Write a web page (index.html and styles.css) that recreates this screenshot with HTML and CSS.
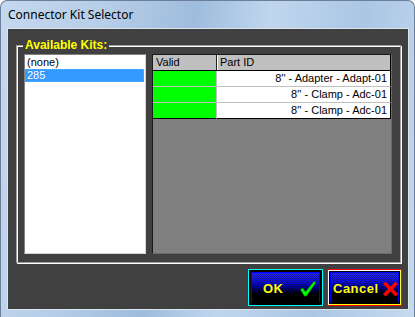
FILE: index.html
```html
<!DOCTYPE html>
<html lang="en">
<head>
    <meta charset="UTF-8">
    <title>Connector Kit Selector</title>
    <link rel="stylesheet" href="styles.css">
</head>
<body>
    <div class="window">
        <div class="titlebar">Connector Kit Selector</div>
        <div class="client">
            <fieldset class="group">
                <legend>Available Kits:</legend>
                <div class="group-body">
                    <ul class="kit-list">
                        <li>(none)</li>
                        <li class="selected">285</li>
                    </ul>
                    <div class="grid">
                        <table class="parts">
                            <thead>
                                <tr>
                                    <th class="col-valid">Valid</th>
                                    <th class="col-part">Part ID</th>
                                </tr>
                            </thead>
                            <tbody>
                                <tr>
                                    <td class="col-valid is-valid"></td>
                                    <td class="col-part">8'' - Adapter - Adapt-01</td>
                                </tr>
                                <tr>
                                    <td class="col-valid is-valid"></td>
                                    <td class="col-part">8'' - Clamp - Adc-01</td>
                                </tr>
                                <tr>
                                    <td class="col-valid is-valid"></td>
                                    <td class="col-part">8'' - Clamp - Adc-01</td>
                                </tr>
                            </tbody>
                        </table>
                    </div>
                </div>
            </fieldset>
            <div class="actions">
                <button class="btn btn-ok">
                    <span class="face">
                        <span class="label">OK</span>
                        <svg class="icon" width="16" height="16" viewBox="0 0 16 16">
                            <polygon points="0.5,8.5 2.8,7.2 5.5,11 14,0.5 15.8,1.8 6.3,15 4.4,15" fill="#00ff00" stroke="#00a000" stroke-width="0.7"/>
                        </svg>
                    </span>
                </button>
                <button class="btn btn-cancel">
                    <span class="face">
                        <span class="label">Cancel</span>
                        <svg class="icon" width="15" height="14" viewBox="0 0 15 14">
                            <path d="M2.5 2 L12.5 12 M12.5 2 L2.5 12" stroke="#ff0000" stroke-width="3.6" stroke-linecap="square"/>
                        </svg>
                    </span>
                </button>
            </div>
        </div>
    </div>
</body>
</html>
```

FILE: styles.css
```css
:root {
    --client-color: #404040;
    --grid-color: #808080;
    --header-color: #c0c0c0;
    --line-color: #c0c0c0;
    --valid-color: #00ff00;
    --select-color: #3399ff;
    --label-color: #ffff00;
}

* {
    box-sizing: border-box;
}

body {
    margin: 0;
    background-color: #ffffff;
    font-family: "Liberation Sans", Arial, sans-serif;
}

.window {
    width: 415px;
    height: 317px;
    display: flex;
    flex-direction: column;
    padding: 0 5px 7px 6px;
    border: 1px solid #6b7f99;
    border-bottom: none;
    border-radius: 7px 7px 0 0;
    background: linear-gradient(100deg, #c4d8ee 0%, #b7cee8 22%, #9ebcdd 42%, #c0d6ee 58%, #abc6e4 78%, #c6daef 100%);
}

.titlebar {
    height: 27px;
    padding: 6px 0 0 1px;
    font-family: "Noto Sans", "Open Sans", sans-serif;
    font-size: 12px;
    line-height: 16px;
    color: #000;
}

.client {
    flex: 1;
    display: flex;
    flex-direction: column;
    padding: 0 7px 0 8px;
    border: 1px solid #dbe5f0;
    background-color: var(--client-color);
}

.group {
    margin: 9px 0 0 0;
    padding: 2px 8px 8px 7px;
    min-inline-size: 0;
    border: 1px solid #a0a0a0;
    box-shadow: inset 1px 1px 0 #fff, 1px 1px 0 #fff;
}

.group legend {
    margin-left: -1px;
    padding: 0 2px;
    font-size: 12px;
    font-weight: bold;
    line-height: 14px;
    color: var(--label-color);
    background-color: var(--client-color);
}

.group-body {
    display: flex;
    gap: 6px;
    height: 200px;
}

.kit-list {
    width: 122px;
    margin: 0;
    padding: 1px 1px 0 0;
    list-style: none;
    background-color: #fff;
    border: 1px solid;
    border-color: #828282 #d4d4d4 #d4d4d4 #828282;
    font-size: 11px;
}

.kit-list li {
    height: 13px;
    padding-left: 2px;
    line-height: 13px;
}

.kit-list .selected {
    color: #fff;
    background-color: var(--select-color);
    outline: 1px dotted #e89040;
    outline-offset: -1px;
}

.grid {
    width: 240px;
    background-color: var(--grid-color);
    border: 1px solid;
    border-color: #1a1a1a #6a6a6a #6a6a6a #1a1a1a;
}

.parts {
    width: 238px;
    table-layout: fixed;
    border-collapse: separate;
    border-spacing: 0;
    font-size: 11px;
}

.parts th,
.parts td {
    height: 16px;
    padding: 0 3px;
    line-height: 15px;
    white-space: nowrap;
}

.parts th {
    font-weight: normal;
    text-align: left;
    background-color: var(--header-color);
    border-bottom: 1px solid #000;
    border-right: 1px solid #202020;
}

.parts th.col-valid {
    width: 64px;
}

.parts th.col-part {
    box-shadow: inset 1px 0 0 #fff;
    border-right-color: #000;
}

.parts td {
    background-color: #fff;
    border-bottom: 1px solid var(--line-color);
    text-align: right;
}

.parts tr:last-child td {
    border-bottom-color: #000;
}

.parts td.col-valid {
    border-right: 1px solid var(--line-color);
}

.parts td.is-valid {
    background-color: var(--valid-color);
}

.parts td.col-part {
    border-right: 1px solid #000;
}

.actions {
    display: flex;
    justify-content: flex-end;
    gap: 4px;
    margin: 6px -1px 0 0;
}

.btn {
    width: 75px;
    height: 37px;
    padding: 2px;
    border: 1px solid;
    background-color: #000;
    cursor: pointer;
}

.btn-ok {
    border-color: #00ffff;
}

.btn-cancel {
    border-color: #ff0000;
    box-shadow: inset 1px 1px 0 #fff, inset -1px -1px 0 #ffff00;
}

.face {
    height: 100%;
    display: flex;
    align-items: center;
    justify-content: space-between;
    padding-top: 2px;
    border: 1px solid #0000ff;
    border-bottom-color: #000;
    background:
        repeating-conic-gradient(rgba(0, 0, 0, 0.35) 0 25%, transparent 0 50%) 0 0 / 2px 2px,
        linear-gradient(to bottom, #2a2aff 0%, #1010e8 30%, #0000a0 48%, #000050 60%, #000 72%);
}

.btn-ok .face {
    padding-left: 11px;
    padding-right: 3px;
}

.btn-cancel .face {
    padding-left: 2px;
    padding-right: 0;
}

.label {
    font-family: "Liberation Sans", Arial, sans-serif;
    font-size: 13px;
    font-weight: bold;
    letter-spacing: 0.5px;
    color: var(--label-color);
}

.icon {
    display: block;
}
```
